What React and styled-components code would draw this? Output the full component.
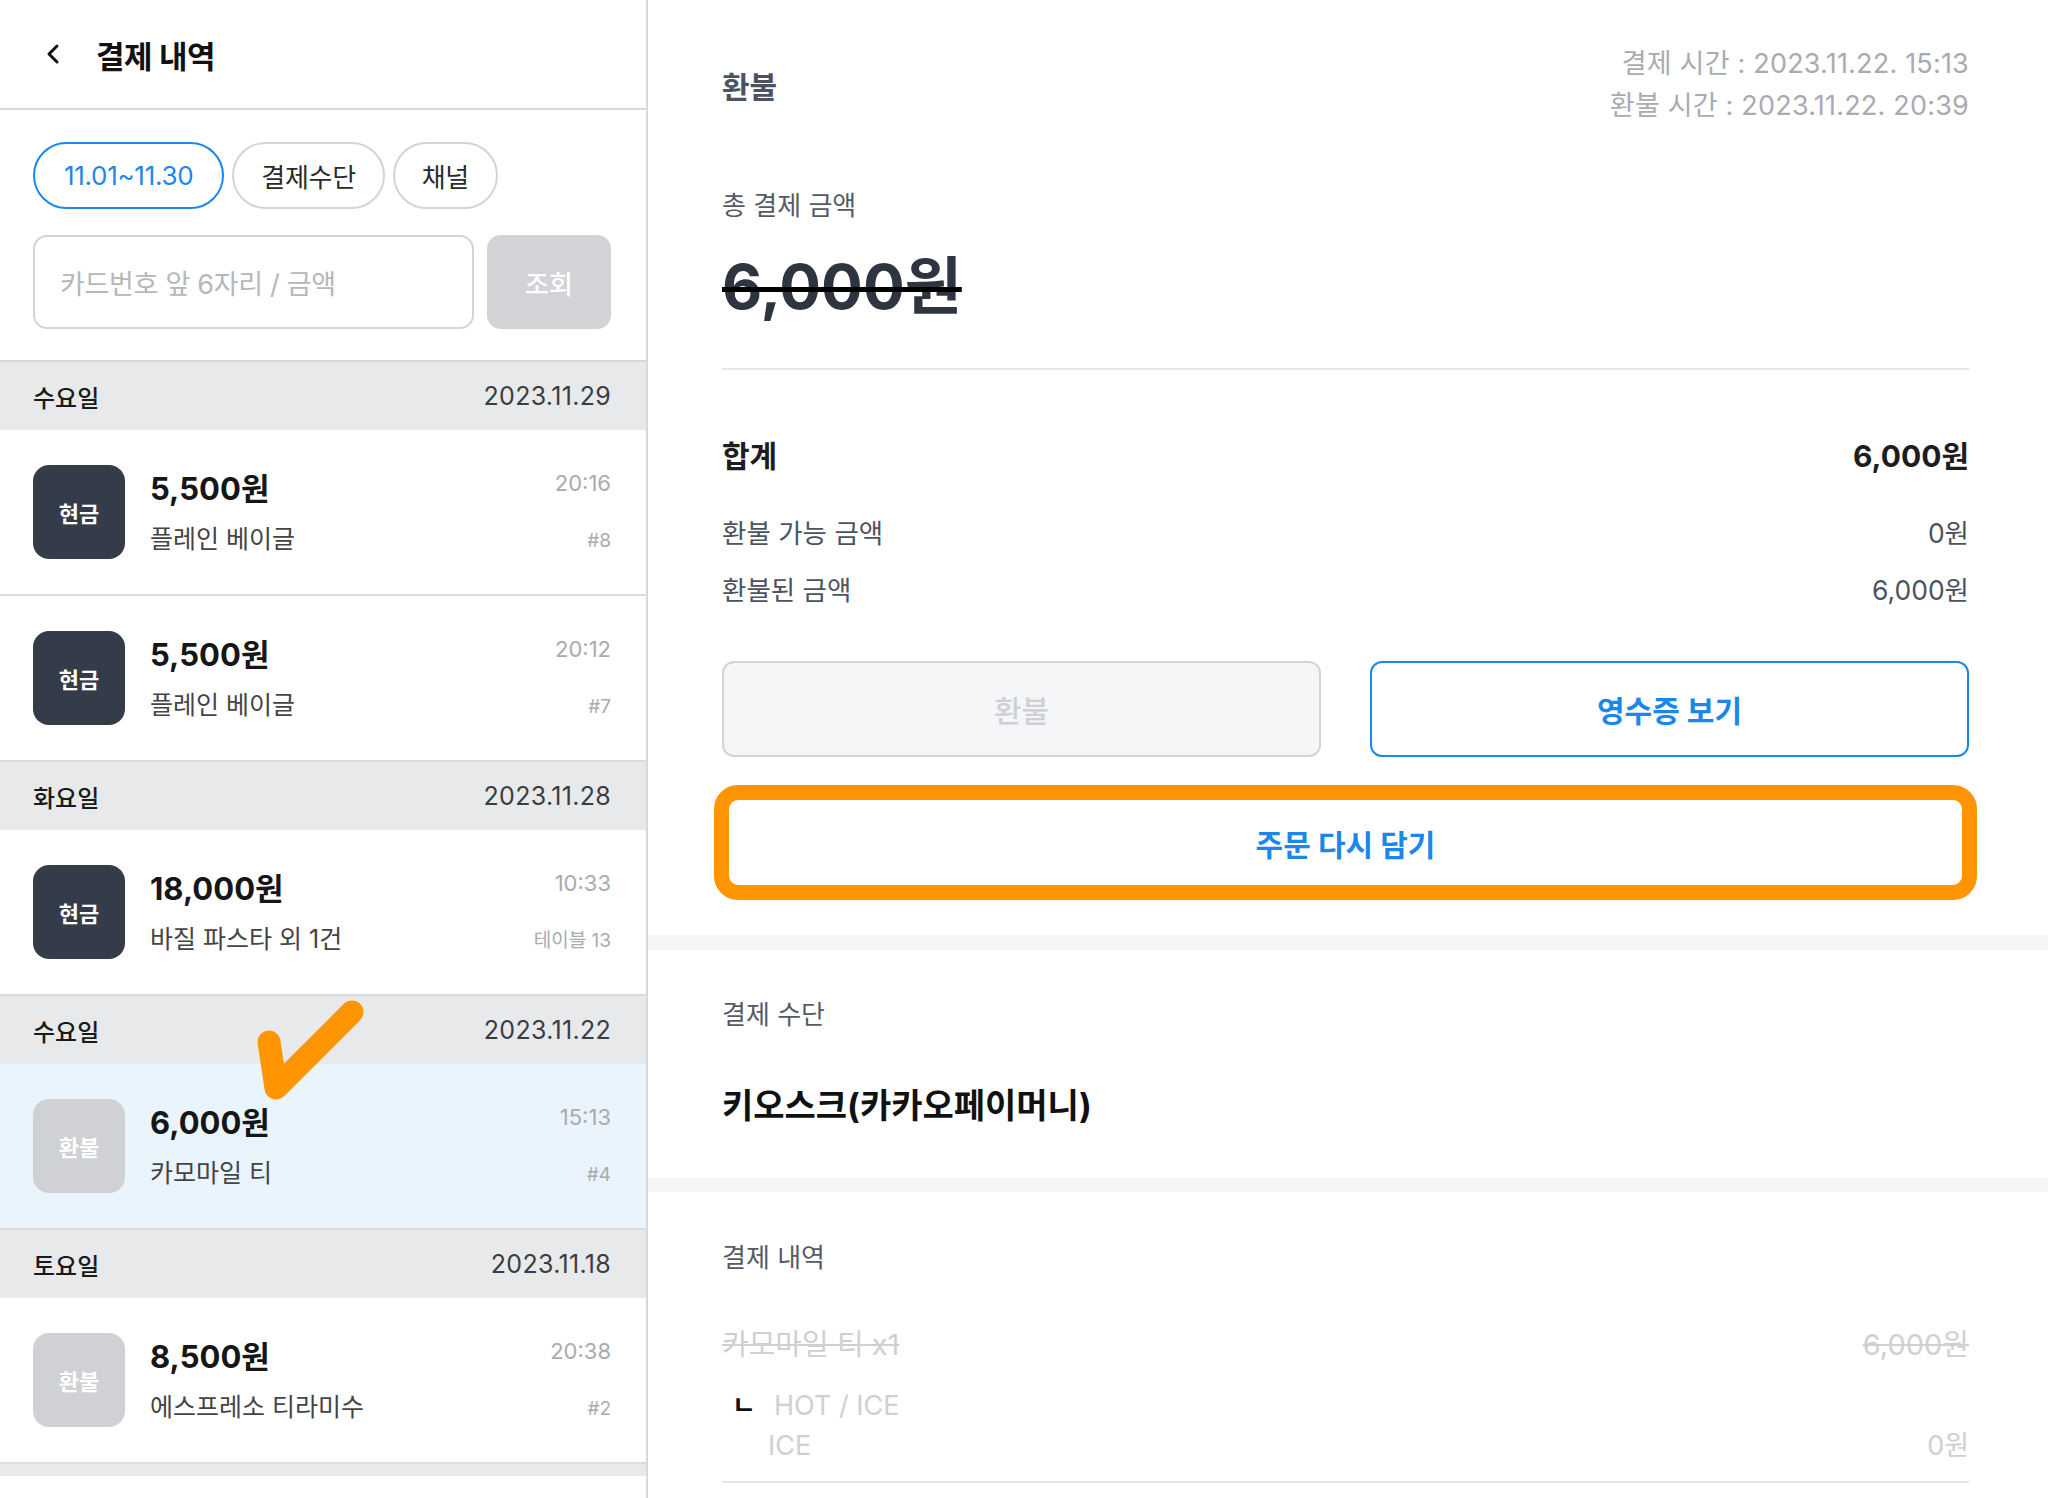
import styled, { createGlobalStyle } from "styled-components";

const GlobalStyle = createGlobalStyle`
  * { box-sizing: border-box; }
  body {
    margin: 0;
    background: #fff;
    font-family: "Inter", "Noto Sans CJK KR", sans-serif;
    color: #1a1a1a;
  }
`;

const Page = styled.div`
  display: flex;
  width: 2048px;
  height: 1498px;
  overflow: hidden;
  background: #fff;
`;

/* ---------- left list ---------- */

const Sidebar = styled.aside`
  position: relative;
  width: 648px;
  flex-shrink: 0;
  border-right: 2px solid #d7d8db;
  display: flex;
  flex-direction: column;
  overflow: hidden;
`;

const Header = styled.div`
  height: 110px;
  flex-shrink: 0;
  display: flex;
  align-items: center;
  gap: 35px;
  padding-left: 45px;
  border-bottom: 2px solid #d7d8db;
`;

const Title = styled.h1`
  margin: 0;
  font-size: 31px;
  font-weight: 700;
  color: #111;
  letter-spacing: -0.5px;
`;

const Filters = styled.div`
  padding: 32px 35px 31px 33px;
  border-bottom: 2px solid #d7d8db;
  flex-shrink: 0;
`;

const ChipRow = styled.div`
  display: flex;
  gap: 8px;
`;

const Chip = styled.button`
  height: 67px;
  padding: 0 ${(p) => (p.$active ? 29 : 27)}px;
  border-radius: 34px;
  background: #fff;
  border: 2px solid ${(p) => (p.$active ? "#1b87ea" : "#d3d4d7")};
  color: ${(p) => (p.$active ? "#1b87ea" : "#2a2a2a")};
  font-family: inherit;
  font-size: 26px;
  letter-spacing: -0.3px;
`;

const SearchRow = styled.div`
  display: flex;
  gap: 13px;
  margin-top: 26px;
`;

const SearchInput = styled.div`
  flex: 1;
  height: 94px;
  border: 2px solid #d3d4d7;
  border-radius: 14px;
  display: flex;
  align-items: center;
  padding-left: 25px;
  font-size: 27px;
  color: #b6b7ba;
  letter-spacing: -0.3px;
`;

const SearchButton = styled.button`
  width: 124px;
  height: 94px;
  border: none;
  border-radius: 14px;
  background: #d1d3d7;
  color: #fff;
  font-family: inherit;
  font-size: 26px;
  font-weight: 500;
`;

const DayHeader = styled.div`
  height: 68px;
  flex-shrink: 0;
  background: #e8e9eb;
  display: flex;
  align-items: center;
  justify-content: space-between;
  padding: 0 35px 0 33px;
`;

const DayName = styled.span`
  font-size: 24px;
  font-weight: 500;
  color: #1a1a1a;
`;

const DayDate = styled.span`
  font-size: 25px;
  letter-spacing: 0.3px;
  color: #3a3d42;
`;

const Row = styled.div`
  height: 166px;
  flex-shrink: 0;
  display: flex;
  align-items: center;
  padding: 0 35px 0 33px;
  border-bottom: 2px solid #dadbde;
  background: ${(p) => (p.$selected ? "#eaf4fd" : "#fff")};
`;

const Badge = styled.div`
  width: 92px;
  height: 94px;
  border-radius: 16px;
  display: flex;
  align-items: center;
  justify-content: center;
  background: ${(p) => (p.$refund ? "#cfd1d5" : "#343c49")};
  color: #fff;
  font-size: 22px;
  font-weight: 600;
`;

const RowText = styled.div`
  flex: 1;
  margin-left: 25px;
  display: flex;
  flex-direction: column;
  gap: 13px;
`;

const Amount = styled.div`
  font-size: 31px;
  line-height: 40px;
  font-weight: 700;
  color: #161616;
`;

const Menu = styled.div`
  font-size: 25px;
  line-height: 34px;
  color: #444;
`;

const RowMeta = styled.div`
  display: flex;
  flex-direction: column;
  align-items: flex-end;
  gap: 28px;
  color: #a9abae;
`;

const Time = styled.div`
  font-size: 22px;
  line-height: 30px;
`;

const Tag = styled.div`
  font-size: 19px;
  line-height: 30px;
`;

const EndBand = styled.div`
  height: 12px;
  flex-shrink: 0;
  background: #e8e9eb;
`;

const CheckMark = styled.svg`
  position: absolute;
  left: 252px;
  top: 996px;
  pointer-events: none;
`;

/* ---------- right detail ---------- */

const Detail = styled.main`
  flex: 1;
  display: flex;
  flex-direction: column;
`;

const Section = styled.section`
  padding: ${(p) => p.$pad || "48px 79px 48px 74px"};
`;

const Band = styled.div`
  height: ${(p) => p.$h || 15}px;
  background: #f4f5f7;
`;

const TopRow = styled.div`
  display: flex;
  justify-content: space-between;
  align-items: center;
`;

const Status = styled.div`
  font-size: 30px;
  font-weight: 600;
  color: #4b5261;
`;

const Stamps = styled.div`
  text-align: right;
  font-size: 27px;
  line-height: 42px;
  letter-spacing: 0.2px;
  color: #a9abb0;
`;

const Label = styled.div`
  margin-top: ${(p) => p.$mt || 0}px;
  font-size: 26px;
  line-height: 34px;
  color: #555b66;
`;

const BigAmount = styled.div`
  margin-top: 29px;
  font-size: 62px;
  line-height: 70px;
  font-weight: 700;
  color: #2f3540;
  text-decoration: line-through;
  text-decoration-color: #000;
  text-decoration-thickness: 5px;
`;

const Divider = styled.div`
  margin-top: ${(p) => p.$mt || 0}px;
  height: 2px;
  background: #e6e7e9;
`;

const LineRow = styled.div`
  margin-top: ${(p) => p.$mt || 0}px;
  display: flex;
  justify-content: space-between;
  font-size: ${(p) => (p.$strong ? 30 : 26.5)}px;
  line-height: ${(p) => (p.$strong ? 40 : 36)}px;
  font-weight: ${(p) => (p.$strong ? 700 : 400)};
  color: ${(p) => (p.$strong ? "#1d1d1f" : "#4d535e")};
`;

const ButtonRow = styled.div`
  margin-top: 53px;
  display: grid;
  grid-template-columns: 1fr 1fr;
  gap: 49px;
`;

const ActionButton = styled.button`
  height: 96px;
  border-radius: 12px;
  font-family: inherit;
  font-size: 30px;
  font-weight: ${(p) => (p.$disabled ? 500 : 700)};
  background: ${(p) => (p.$disabled ? "#f5f6f8" : "#fff")};
  border: 2px solid ${(p) => (p.$disabled ? "#d3d4d7" : "#1b87ea")};
  color: ${(p) => (p.$disabled ? "#cfd0d3" : "#1b87ea")};
`;

const ReorderButton = styled.button`
  display: block;
  width: calc(100% + 16px);
  margin: 28px -8px 0;
  height: 115px;
  border: 15px solid #ff9500;
  border-radius: 24px;
  background: #fff;
  color: #1b87ea;
  font-family: inherit;
  font-size: 30px;
  font-weight: 700;
`;

const Method = styled.div`
  margin-top: 50px;
  font-size: 34px;
  line-height: 48px;
  font-weight: 700;
  color: #111;
`;

const ItemRow = styled.div`
  margin-top: 51px;
  display: flex;
  justify-content: space-between;
  font-size: 29px;
  line-height: 38px;
  color: #cfd0d3;
  text-decoration: line-through;
`;

const OptionRow = styled.div`
  margin-top: 22px;
  display: flex;
  align-items: center;
  font-size: 27px;
  line-height: 40px;
  color: #cfd0d3;
`;

const Marker = styled.span`
  width: 52px;
  padding-left: 10px;
  font-size: 26px;
  font-weight: 700;
  color: #111;
`;

const OptionValue = styled.div`
  display: flex;
  justify-content: space-between;
  padding-left: 46px;
  font-size: 27px;
  line-height: 40px;
  color: #cfd0d3;
`;

const groups = [
  {
    day: "수요일",
    date: "2023.11.29",
    rows: [
      { type: "현금", amount: "5,500원", menu: "플레인 베이글", time: "20:16", tag: "#8" },
      { type: "현금", amount: "5,500원", menu: "플레인 베이글", time: "20:12", tag: "#7" },
    ],
  },
  {
    day: "화요일",
    date: "2023.11.28",
    rows: [{ type: "현금", amount: "18,000원", menu: "바질 파스타 외 1건", time: "10:33", tag: "테이블 13" }],
  },
  {
    day: "수요일",
    date: "2023.11.22",
    rows: [{ type: "환불", amount: "6,000원", menu: "카모마일 티", time: "15:13", tag: "#4", selected: true }],
  },
  {
    day: "토요일",
    date: "2023.11.18",
    rows: [{ type: "환불", amount: "8,500원", menu: "에스프레소 티라미수", time: "20:38", tag: "#2" }],
  },
];

const App = () => {
  return (
    <>
      <GlobalStyle />
      <Page>
        <Sidebar>
          <Header>
            <svg width="16" height="22" viewBox="0 0 16 22">
              <polyline points="12,3 4,11 12,19" fill="none" stroke="#111" strokeWidth="3" strokeLinecap="round" strokeLinejoin="round" />
            </svg>
            <Title>결제 내역</Title>
          </Header>

          <Filters>
            <ChipRow>
              <Chip $active>11.01~11.30</Chip>
              <Chip>결제수단</Chip>
              <Chip>채널</Chip>
            </ChipRow>
            <SearchRow>
              <SearchInput>카드번호 앞 6자리 / 금액</SearchInput>
              <SearchButton>조회</SearchButton>
            </SearchRow>
          </Filters>

          {groups.map((g) => (
            <div key={g.date}>
              <DayHeader>
                <DayName>{g.day}</DayName>
                <DayDate>{g.date}</DayDate>
              </DayHeader>
              {g.rows.map((r) => (
                <Row key={r.time} $selected={r.selected}>
                  <Badge $refund={r.type === "환불"}>{r.type}</Badge>
                  <RowText>
                    <Amount>{r.amount}</Amount>
                    <Menu>{r.menu}</Menu>
                  </RowText>
                  <RowMeta>
                    <Time>{r.time}</Time>
                    <Tag>{r.tag}</Tag>
                  </RowMeta>
                </Row>
              ))}
            </div>
          ))}
          <EndBand />

          <CheckMark width="112" height="108" viewBox="0 0 112 108">
            <path d="M17 46 L24 92 L100 16" fill="none" stroke="#ff9500" strokeWidth="23" strokeLinecap="round" strokeLinejoin="round" />
          </CheckMark>
        </Sidebar>

        <Detail>
          <Section $pad="43px 79px 35px 74px">
            <TopRow>
              <Status>환불</Status>
              <Stamps>
                <div>결제 시간 : 2023.11.22. 15:13</div>
                <div>환불 시간 : 2023.11.22. 20:39</div>
              </Stamps>
            </TopRow>
            <Label $mt={62}>총 결제 금액</Label>
            <BigAmount>6,000원</BigAmount>
            <Divider $mt={46} />
            <LineRow $strong $mt={66}>
              <span>합계</span>
              <span>6,000원</span>
            </LineRow>
            <LineRow $mt={39}>
              <span>환불 가능 금액</span>
              <span>0원</span>
            </LineRow>
            <LineRow $mt={21}>
              <span>환불된 금액</span>
              <span>6,000원</span>
            </LineRow>
            <ButtonRow>
              <ActionButton $disabled>환불</ActionButton>
              <ActionButton>영수증 보기</ActionButton>
            </ButtonRow>
            <ReorderButton>주문 다시 담기</ReorderButton>
          </Section>
          <Band $h={15} />

          <Section>
            <Label>결제 수단</Label>
            <Method>키오스크(카카오페이머니)</Method>
          </Section>
          <Band $h={14} />

          <Section $pad="49px 79px 0 74px">
            <Label>결제 내역</Label>
            <ItemRow>
              <span>카모마일 티 x1</span>
              <span>6,000원</span>
            </ItemRow>
            <OptionRow>
              <Marker>ㄴ</Marker>
              <span>HOT / ICE</span>
            </OptionRow>
            <OptionValue>
              <span>ICE</span>
              <span>0원</span>
            </OptionValue>
            <Divider $mt={15} />
          </Section>
        </Detail>
      </Page>
    </>
  );
};

export default App;
